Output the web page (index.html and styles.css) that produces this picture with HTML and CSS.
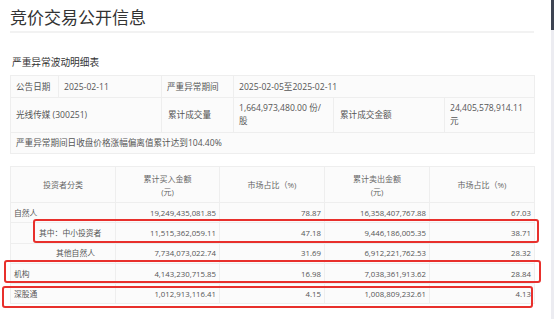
FILE: index.html
```html
<!DOCTYPE html>
<html>
<head>
  <meta charset="utf-8">
  <link rel="stylesheet" href="styles.css">
</head>
<body>
<div class="page">
  <h1 class="title">竞价交易公开信息</h1>
  <h2 class="subtitle">严重异常波动明细表</h2>

  <table class="info">
    <colgroup>
      <col style="width:48px"><col style="width:103px"><col style="width:72px">
      <col style="width:100px"><col style="width:111px"><col style="width:90px">
    </colgroup>
    <tr class="r1">
      <td>公告日期</td>
      <td>2025-02-11</td>
      <td>严重异常期间</td>
      <td colspan="3">2025-02-05至2025-02-11</td>
    </tr>
    <tr class="r2">
      <td colspan="2">光线传媒 (300251)</td>
      <td>累计成交量</td>
      <td>1,664,973,480.00 份/<br>股</td>
      <td>累计成交金额</td>
      <td>24,405,578,914.11<br>元</td>
    </tr>
    <tr class="r3">
      <td colspan="6">严重异常期间日收盘价格涨幅偏离值累计达到104.40%</td>
    </tr>
  </table>

  <table class="detail">
    <colgroup>
      <col style="width:105px"><col style="width:104px"><col style="width:105px">
      <col style="width:105px"><col style="width:105px">
    </colgroup>
    <tr class="head">
      <th>投资者分类</th>
      <th>累计买入金额<br>(元)</th>
      <th>市场占比（%)</th>
      <th>累计卖出金额<br>(元)</th>
      <th>市场占比（%)</th>
    </tr>
    <tr>
      <td class="name">自然人</td>
      <td>19,249,435,081.85</td>
      <td>78.87</td>
      <td>16,358,407,767.88</td>
      <td>67.03</td>
    </tr>
    <tr>
      <td class="name sub">其中：中小投资者</td>
      <td>11,515,362,059.11</td>
      <td>47.18</td>
      <td>9,446,186,005.35</td>
      <td>38.71</td>
    </tr>
    <tr>
      <td class="name other">其他自然人</td>
      <td>7,734,073,022.74</td>
      <td>31.69</td>
      <td>6,912,221,762.53</td>
      <td>28.32</td>
    </tr>
    <tr>
      <td class="name">机构</td>
      <td>4,143,230,715.85</td>
      <td>16.98</td>
      <td>7,038,361,913.62</td>
      <td>28.84</td>
    </tr>
    <tr>
      <td class="name">深股通</td>
      <td>1,012,913,116.41</td>
      <td>4.15</td>
      <td>1,008,809,232.61</td>
      <td>4.13</td>
    </tr>
  </table>
</div>

<div class="mark mark-sub"></div>
<div class="mark mark-org"></div>
<div class="mark mark-hk"></div>

<div class="scrollbar"><div class="thumb"></div></div>
</body>
</html>
```

FILE: styles.css
```css
html, body {
  margin: 0;
  padding: 0;
  background: #fff;
  color: #555;
  font-family: "Open Sans", "Noto Sans CJK SC", sans-serif;
  overflow: hidden;
}
.page {
  width: 524px;
  padding: 0 10px;
}
.title {
  margin: 7px 0 0;
  padding-bottom: 2px;
  font-size: 17px;
  line-height: 22px;
  font-weight: normal;
  color: #333;
  border-bottom: 2px solid #f2f2f2;
}
.subtitle {
  margin: 23px 0 5px;
  padding-left: 2px;
  font-size: 9.7px;
  line-height: 14px;
  font-weight: normal;
  color: #333;
}
table {
  width: 524px;
  table-layout: fixed;
  border-collapse: collapse;
  background: #fbfbfb;
}
td, th {
  border: 1px solid #eeeeee;
  font-weight: normal;
  white-space: nowrap;
}

/* summary table */
.info td {
  font-size: 8.6px;
  padding: 0 5px;
  color: #555;
}
.info .r1 td { height: 21px; line-height: 12px; }
.info .r2 td { height: 34px; line-height: 13px; }
.info .r3 td { height: 20px; line-height: 12px; }
.info .r2 td:nth-child(2),
.info .r2 td:nth-child(4) { padding-left: 6px; }

/* detail table */
.detail {
  margin-top: 12px;
}
.detail th {
  height: 33px;
  font-size: 8px;
  line-height: 13px;
  color: #666;
  text-align: center;
}
.detail td {
  height: 19.3px;
  font-size: 7.8px;
  line-height: 12px;
  padding: 0 3px;
  text-align: right;
  color: #555;
}
.detail td.name { text-align: left; }
.detail td.sub { padding-left: 28px; }
.detail td.other { padding-left: 45px; }

/* red annotation boxes */
.mark {
  position: absolute;
  border: 2px solid #e8302c;
  border-radius: 3px;
  box-sizing: border-box;
}
.mark-sub { left: 33px; top: 219px; width: 506px; height: 24px; }
.mark-org { left: 4px; top: 260px; width: 537px; height: 23px; }
.mark-hk { left: 2px; top: 286px; width: 531px; height: 22px; }

.scrollbar {
  position: fixed;
  top: 0;
  right: 0;
  width: 3px;
  height: 100%;
  background: #ececf1;
}
.scrollbar .thumb {
  height: 30px;
  background: #3e4452;
}
```
